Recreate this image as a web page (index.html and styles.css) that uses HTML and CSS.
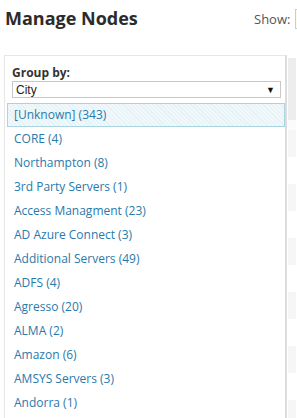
FILE: index.html
```html
<!DOCTYPE html>
<html>
<head>
<meta charset="utf-8">
<link rel="stylesheet" href="styles.css">
</head>
<body>
<div class="header">
  <h1 class="title">Manage Nodes</h1>
  <div class="show"><span class="show-label">Show:</span><span class="show-input"></span></div>
</div>
<div class="main">
  <div class="panel">
    <div class="group">
      <div class="group-label">Group by:</div>
      <div class="select"><span>City</span><span class="arrow">&#9660;</span></div>
    </div>
    <ul class="list">
      <li class="item selected">[Unknown] (343)</li>
      <li class="item">CORE (4)</li>
      <li class="item">Northampton (8)</li>
      <li class="item">3rd Party Servers (1)</li>
      <li class="item">Access Managment (23)</li>
      <li class="item">AD Azure Connect (3)</li>
      <li class="item">Additional Servers (49)</li>
      <li class="item">ADFS (4)</li>
      <li class="item">Agresso (20)</li>
      <li class="item">ALMA (2)</li>
      <li class="item">Amazon (6)</li>
      <li class="item">AMSYS Servers (3)</li>
      <li class="item">Andorra (1)</li>
    </ul>
  </div>
  <div class="side">
    <div class="side-head"></div>
    <div class="side-gap"></div>
    <div class="stripe"></div><div class="gap"></div>
    <div class="stripe"></div><div class="gap"></div>
    <div class="stripe"></div><div class="gap"></div>
    <div class="stripe"></div><div class="gap"></div>
    <div class="stripe"></div><div class="gap"></div>
    <div class="stripe"></div>
  </div>
</div>
</body>
</html>
```
FILE: styles.css
```css
html, body { margin: 0; padding: 0; background: #fff; overflow: hidden; }
body { font-family: "Open Sans", sans-serif; width: 297px; height: 418px; }
.header { display: flex; justify-content: space-between; align-items: flex-start; height: 55px; }
.title { margin: 6px 0 0 5px; font-size: 18px; font-weight: 700; color: #2b2b2b; line-height: 25px; }
.show { display: flex; align-items: flex-start; width: 43px; overflow: hidden; margin-top: 9px; font-size: 13px; color: #555; white-space: nowrap; }
.show-label { line-height: 20px; margin-right: 5px; flex-shrink: 0; }
.show-input { display: block; flex-shrink: 0; width: 30px; height: 18px; border: 1px solid #ccc; background: #fffbe8; }
.main { display: flex; align-items: flex-start; }
.panel { width: 283px; margin-left: 4px; border-top: 1px solid #e6e6e6; border-left: 1px solid #e6e6e6; border-right: 2px solid #dcdcdc; height: 363px; box-sizing: border-box; overflow: hidden; }
.group { padding: 9px 5px 5px 7px; }
.group-label { font-size: 12px; font-weight: 700; color: #333; line-height: 15px; }
.select { display: flex; justify-content: space-between; align-items: center; height: 17px; margin-top: 1px; border: 1px solid #c8c8c8; padding: 0 5px 0 3px; font-family: "Liberation Sans", sans-serif; font-size: 12px; color: #222; width: 269px; box-sizing: border-box; }
.arrow { font-size: 9px; color: #111; }
.list { list-style: none; margin: 0; padding: 0 0 0 2px; }
.item { height: 24px; line-height: 24px; padding-left: 7px; font-size: 12px; color: #2a79ab; box-sizing: border-box; white-space: nowrap; }
.selected { border: 1px solid #a9d5e3; line-height: 22px; padding-left: 6px; background: repeating-linear-gradient(45deg, #e4f2f6 0px, #e4f2f6 1px, #f1f8fb 1px, #f1f8fb 3px); }
.side { margin-left: 1px; margin-top: 3px; width: 8px; }
.side-head { height: 62px; background: #ededed; }
.side-gap { height: 10px; background: #fbfbfb; }
.stripe { height: 27px; background: #f6f6f6; }
.gap { height: 27px; background: #fff; }
```
